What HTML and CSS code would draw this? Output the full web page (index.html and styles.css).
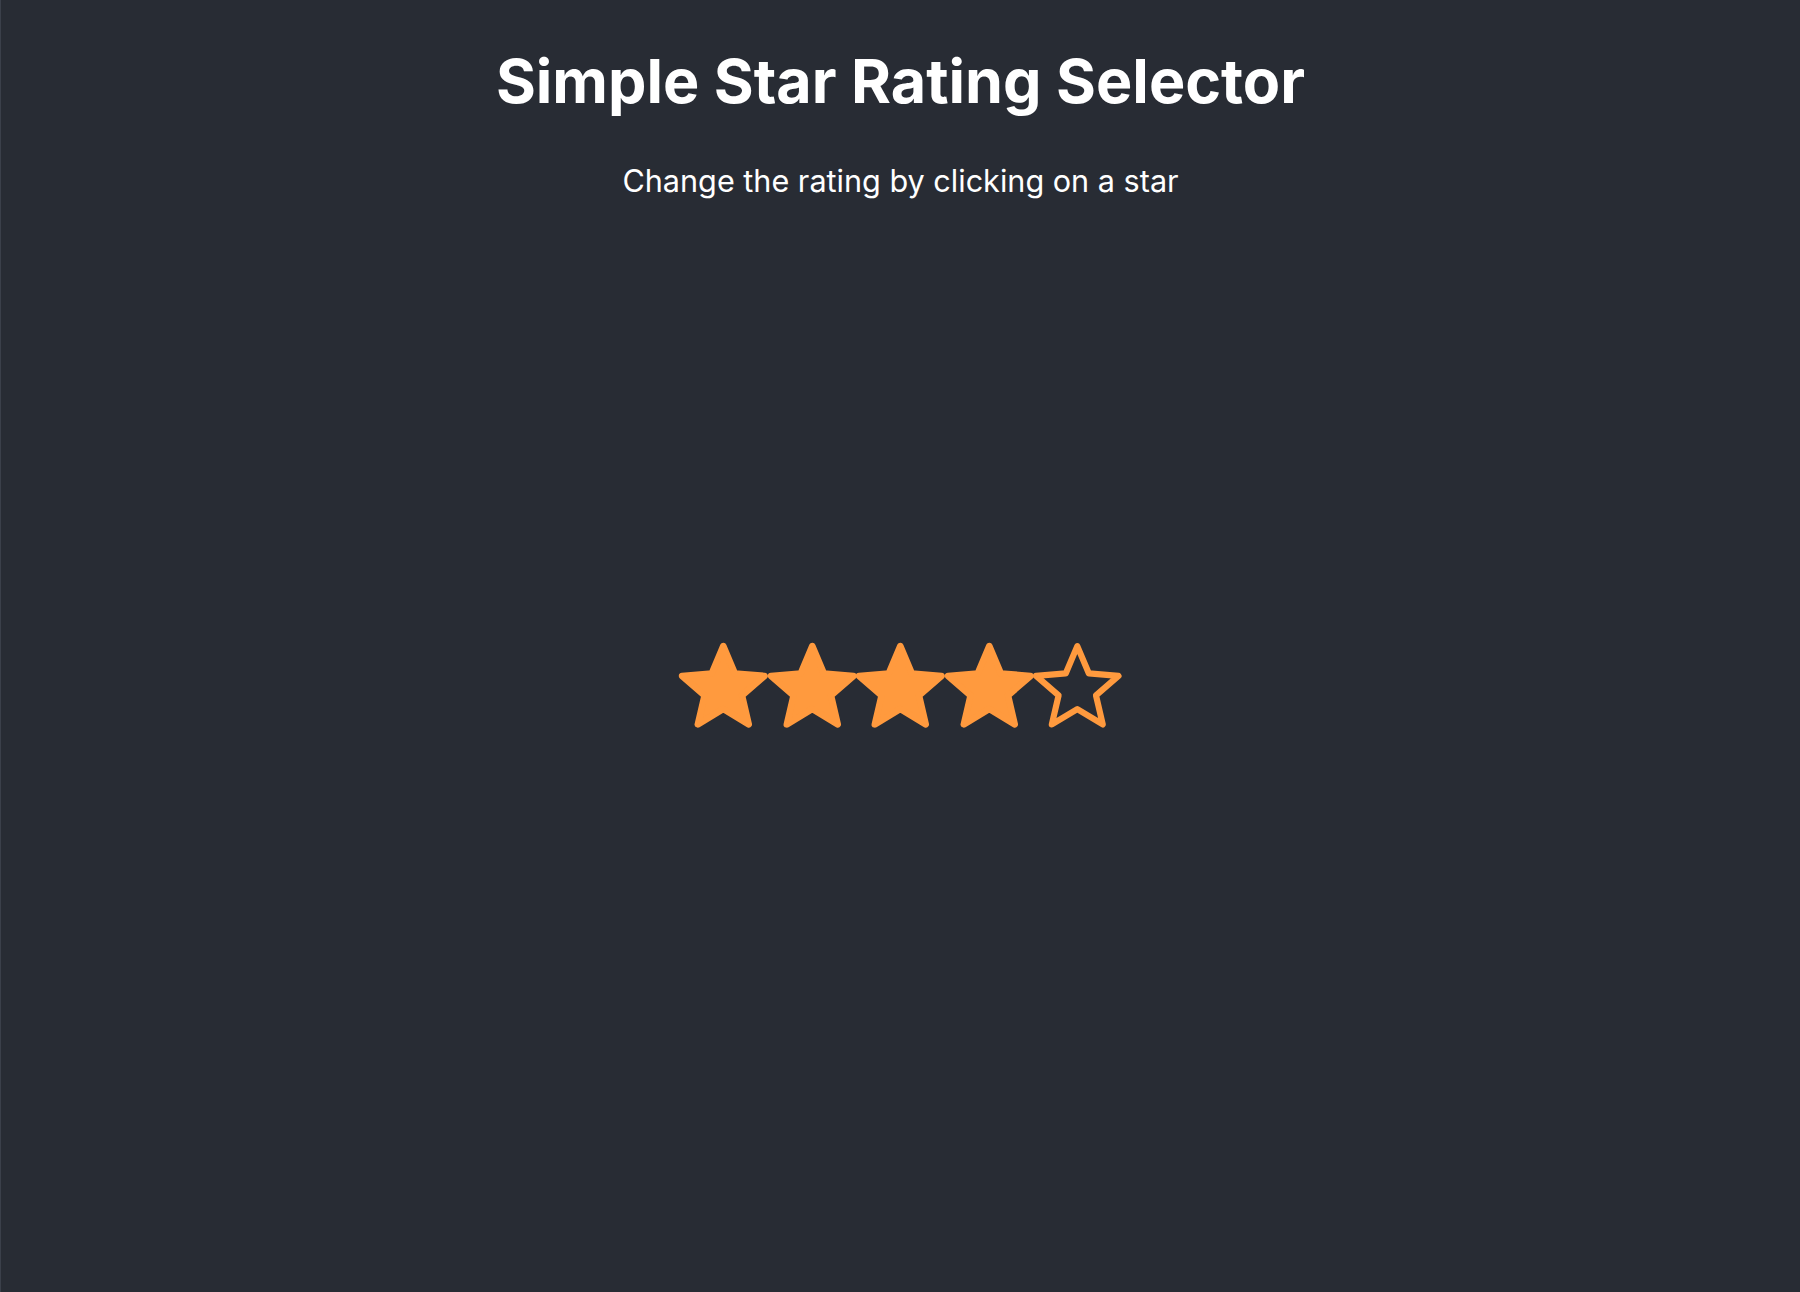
FILE: index.html
```html
<!DOCTYPE html>
<html lang="en">
<head>
<meta charset="utf-8">
<title>Simple Star Rating Selector</title>
<link rel="stylesheet" href="styles.css">
</head>
<body>
<div class="app">
  <header class="header">
    <h1 class="title">Simple Star Rating Selector</h1>
    <p class="subtitle">Change the rating by clicking on a star</p>
  </header>
  <main class="rating-area">
    <div class="stars">
      <button class="star" aria-label="1 star">
        <svg viewBox="1.25 1.25 21.5 20.5"><path class="filled" d="M12 17.27L18.18 21l-1.64-7.03L22 9.24l-7.19-.61L12 2 9.19 8.63 2 9.24l5.46 4.73L5.82 21z"/></svg>
      </button>
      <button class="star" aria-label="2 stars">
        <svg viewBox="1.25 1.25 21.5 20.5"><path class="filled" d="M12 17.27L18.18 21l-1.64-7.03L22 9.24l-7.19-.61L12 2 9.19 8.63 2 9.24l5.46 4.73L5.82 21z"/></svg>
      </button>
      <button class="star" aria-label="3 stars">
        <svg viewBox="1.25 1.25 21.5 20.5"><path class="filled" d="M12 17.27L18.18 21l-1.64-7.03L22 9.24l-7.19-.61L12 2 9.19 8.63 2 9.24l5.46 4.73L5.82 21z"/></svg>
      </button>
      <button class="star" aria-label="4 stars">
        <svg viewBox="1.25 1.25 21.5 20.5"><path class="filled" d="M12 17.27L18.18 21l-1.64-7.03L22 9.24l-7.19-.61L12 2 9.19 8.63 2 9.24l5.46 4.73L5.82 21z"/></svg>
      </button>
      <button class="star" aria-label="5 stars">
        <svg viewBox="1.25 1.25 21.5 20.5"><path class="empty" d="M12 17.27L18.18 21l-1.64-7.03L22 9.24l-7.19-.61L12 2 9.19 8.63 2 9.24l5.46 4.73L5.82 21z"/></svg>
      </button>
    </div>
  </main>
</div>
</body>
</html>
```

FILE: styles.css
```css
html, body {
  margin: 0;
  padding: 0;
  height: 100%;
}

body {
  background: #282c34;
  font-family: Inter, "Noto Sans", sans-serif;
  color: #ffffff;
}

.app {
  min-height: 100vh;
  box-sizing: border-box;
  border-left: 1px solid #3b404a;
  display: flex;
  flex-direction: column;
}

.header {
  text-align: center;
  padding-top: 44px;
}

.title {
  margin: 0;
  font-size: 61px;
  font-weight: 700;
  line-height: 74px;
  letter-spacing: 0;
}

.subtitle {
  margin: 45px 0 0;
  font-size: 30.6px;
  font-weight: 400;
  line-height: 36px;
}

.rating-area {
  display: flex;
  justify-content: center;
  padding-top: 444px;
}

.stars {
  display: flex;
}

.star {
  display: block;
  width: 88.6px;
  height: 84.5px;
  padding: 0;
  margin: 0;
  border: 0;
  background: none;
  cursor: pointer;
}

.star svg {
  display: block;
  width: 100%;
  height: 100%;
  overflow: visible;
}

.filled {
  fill: #ff9a3e;
  stroke: #ff9a3e;
  stroke-width: 1.6;
  stroke-linejoin: round;
}

.empty {
  fill: none;
  stroke: #ff9a3e;
  stroke-width: 1.5;
  stroke-linejoin: round;
}
```
